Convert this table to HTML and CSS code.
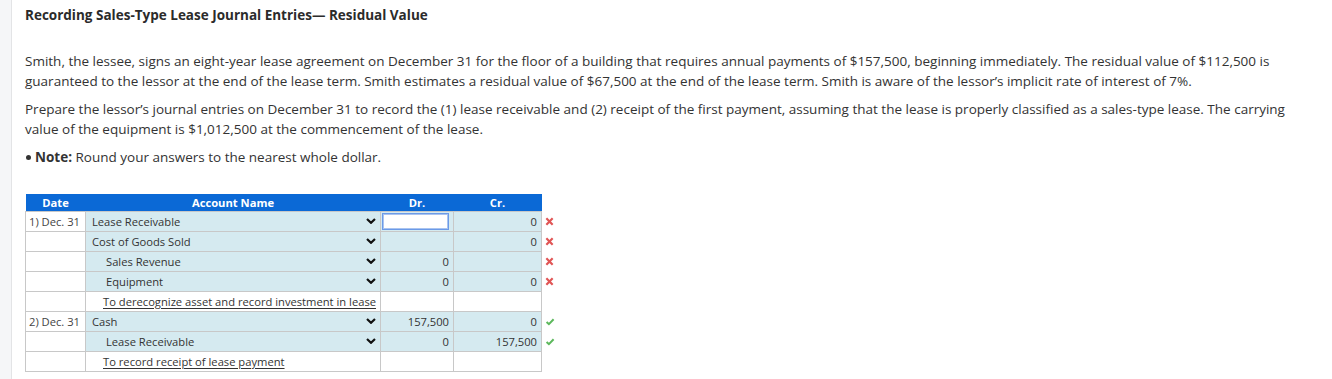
FILE: index.html
```html
<!DOCTYPE html>
<html>
<head>
<meta charset="utf-8">
<link rel="stylesheet" href="styles.css">
</head>
<body>
<div class="page">
  <div class="rail"></div>
  <main class="content">
    <h1 class="title">Recording Sales-Type Lease Journal Entries— Residual Value</h1>
    <p class="para first">Smith, the lessee, signs an eight-year lease agreement on December 31 for the floor of a building that requires annual payments of $157,500, beginning immediately. The residual value of $112,500 is guaranteed to the lessor at the end of the lease term. Smith estimates a residual value of $67,500 at the end of the lease term. Smith is aware of the lessor’s implicit rate of interest of 7%.</p>
    <p class="para">Prepare the lessor’s journal entries on December 31 to record the (1) lease receivable and (2) receipt of the first payment, assuming that the lease is properly classified as a sales-type lease. The carrying value of the equipment is $1,012,500 at the commencement of the lease.</p>
    <p class="para note"><span class="dot"></span><b>Note:</b> Round your answers to the nearest whole dollar.</p>

    <table class="je">
      <colgroup>
        <col class="c-date"><col class="c-acct"><col class="c-dr"><col class="c-cr"><col class="c-mark">
      </colgroup>
      <thead>
        <tr><th>Date</th><th>Account Name</th><th>Dr.</th><th>Cr.</th><th class="mark"></th></tr>
      </thead>
      <tbody>
        <tr>
          <td class="date">1) Dec. 31</td>
          <td class="fill"><div class="acct"><span>Lease Receivable</span><svg class="chev" viewBox="0 0 10 6"><path d="M1 1 L5 4.8 L9 1" /></svg></div></td>
          <td class="num fill"><div class="input"></div></td>
          <td class="num fill">0</td>
          <td class="mark"><svg class="x" viewBox="0 0 10 10"><path d="M1.5 1.5 L8.5 8.5 M8.5 1.5 L1.5 8.5"/></svg></td>
        </tr>
        <tr>
          <td class="date"></td>
          <td class="fill"><div class="acct"><span>Cost of Goods Sold</span><svg class="chev" viewBox="0 0 10 6"><path d="M1 1 L5 4.8 L9 1" /></svg></div></td>
          <td class="num fill"></td>
          <td class="num fill">0</td>
          <td class="mark"><svg class="x" viewBox="0 0 10 10"><path d="M1.5 1.5 L8.5 8.5 M8.5 1.5 L1.5 8.5"/></svg></td>
        </tr>
        <tr>
          <td class="date"></td>
          <td class="fill"><div class="acct cr-ind"><span>Sales Revenue</span><svg class="chev" viewBox="0 0 10 6"><path d="M1 1 L5 4.8 L9 1" /></svg></div></td>
          <td class="num fill">0</td>
          <td class="num fill"></td>
          <td class="mark"><svg class="x" viewBox="0 0 10 10"><path d="M1.5 1.5 L8.5 8.5 M8.5 1.5 L1.5 8.5"/></svg></td>
        </tr>
        <tr>
          <td class="date"></td>
          <td class="fill"><div class="acct cr-ind"><span>Equipment</span><svg class="chev" viewBox="0 0 10 6"><path d="M1 1 L5 4.8 L9 1" /></svg></div></td>
          <td class="num fill">0</td>
          <td class="num fill">0</td>
          <td class="mark"><svg class="x" viewBox="0 0 10 10"><path d="M1.5 1.5 L8.5 8.5 M8.5 1.5 L1.5 8.5"/></svg></td>
        </tr>
        <tr>
          <td class="date"></td>
          <td><div class="acct expl"><span>To derecognize asset and record investment in lease</span></div></td>
          <td class="num"></td>
          <td class="num"></td>
          <td class="mark"></td>
        </tr>
        <tr>
          <td class="date">2) Dec. 31</td>
          <td class="fill"><div class="acct"><span>Cash</span><svg class="chev" viewBox="0 0 10 6"><path d="M1 1 L5 4.8 L9 1" /></svg></div></td>
          <td class="num fill">157,500</td>
          <td class="num fill">0</td>
          <td class="mark"><svg class="ok" viewBox="0 0 10 10"><path d="M1.2 5.5 L3.8 8 L9 2.5"/></svg></td>
        </tr>
        <tr>
          <td class="date"></td>
          <td class="fill"><div class="acct cr-ind"><span>Lease Receivable</span><svg class="chev" viewBox="0 0 10 6"><path d="M1 1 L5 4.8 L9 1" /></svg></div></td>
          <td class="num fill">0</td>
          <td class="num fill">157,500</td>
          <td class="mark"><svg class="ok" viewBox="0 0 10 10"><path d="M1.2 5.5 L3.8 8 L9 2.5"/></svg></td>
        </tr>
        <tr>
          <td class="date"></td>
          <td><div class="acct expl"><span>To record receipt of lease payment</span></div></td>
          <td class="num"></td>
          <td class="num"></td>
          <td class="mark"></td>
        </tr>
      </tbody>
    </table>
  </main>
</div>
</body>
</html>
```
FILE: styles.css
```css
html, body {
  margin: 0;
  padding: 0;
  background: #fff;
}
body {
  font-family: "Open Sans", "Liberation Sans", sans-serif;
  color: #333;
}
.page {
  display: flex;
  min-height: 379px;
}
.rail {
  width: 11px;
  flex: none;
  background: #f5f6f8;
  border-right: 1px solid #e3e4e6;
}
.content {
  flex: 1;
  padding: 4px 24px 0 13px;
}
.title {
  margin: 0;
  font-size: 13.5px;
  font-weight: 700;
  line-height: 22px;
  color: #2b2b2b;
}
.para {
  margin: 0 0 8px;
  font-size: 13.5px;
  line-height: 20px;
  color: #333;
}
.para.first {
  margin-top: 25px;
}
.note b {
  font-weight: 700;
}
.dot {
  display: inline-block;
  width: 5px;
  height: 5px;
  border-radius: 50%;
  background: #333;
  margin: 0 4px 2px 1px;
  vertical-align: middle;
}
.je {
  margin-top: 27px;
  border-collapse: collapse;
  table-layout: fixed;
  font-size: 11.2px;
  color: #333;
}
.c-date { width: 60px; }
.c-acct { width: 295px; }
.c-dr { width: 73px; }
.c-cr { width: 88px; }
.c-mark { width: 16px; }
.je th {
  background: #0b69d6;
  color: #fff;
  font-weight: 700;
  height: 17px;
  padding: 0;
  line-height: 17px;
  text-align: center;
}
.je th.mark {
  background: transparent;
}
.je td {
  height: 19px;
  padding: 0;
  border: 1px solid #c8c8c8;
  line-height: 18px;
  white-space: nowrap;
}
.je td.mark {
  border: none;
  padding-left: 3px;
}
.je td.date {
  text-align: left;
  padding-left: 3px;
  color: #444;
}
.je td.fill {
  background: #d5eaf0;
}
.acct {
  display: flex;
  align-items: center;
  justify-content: space-between;
  height: 18px;
  padding: 0 4px 0 6px;
}
.acct.cr-ind {
  padding-left: 20px;
}
.acct.expl {
  padding-left: 17px;
}
.acct.expl span {
  text-decoration: underline;
  text-decoration-thickness: 1px;
  text-underline-offset: 2px;
}
.chev {
  width: 10px;
  height: 6px;
  margin-bottom: 2px;
  fill: none;
  stroke: #111;
  stroke-width: 2.2;
}
.je td.num {
  text-align: right;
  padding-right: 4px;
}
.input {
  height: 15px;
  margin: 0 0 0 1px;
  border: 1px solid #6b9ae8;
  background: #fff;
  box-shadow: inset 0 0 0 1px #a9c4f0;
}
.x, .ok {
  display: block;
  fill: none;
}
.x {
  width: 9px;
  height: 9px;
  stroke: #e05555;
  stroke-width: 2.4;
}
.ok {
  width: 10px;
  height: 9px;
  stroke: #5cb85c;
  stroke-width: 2.2;
}
```
